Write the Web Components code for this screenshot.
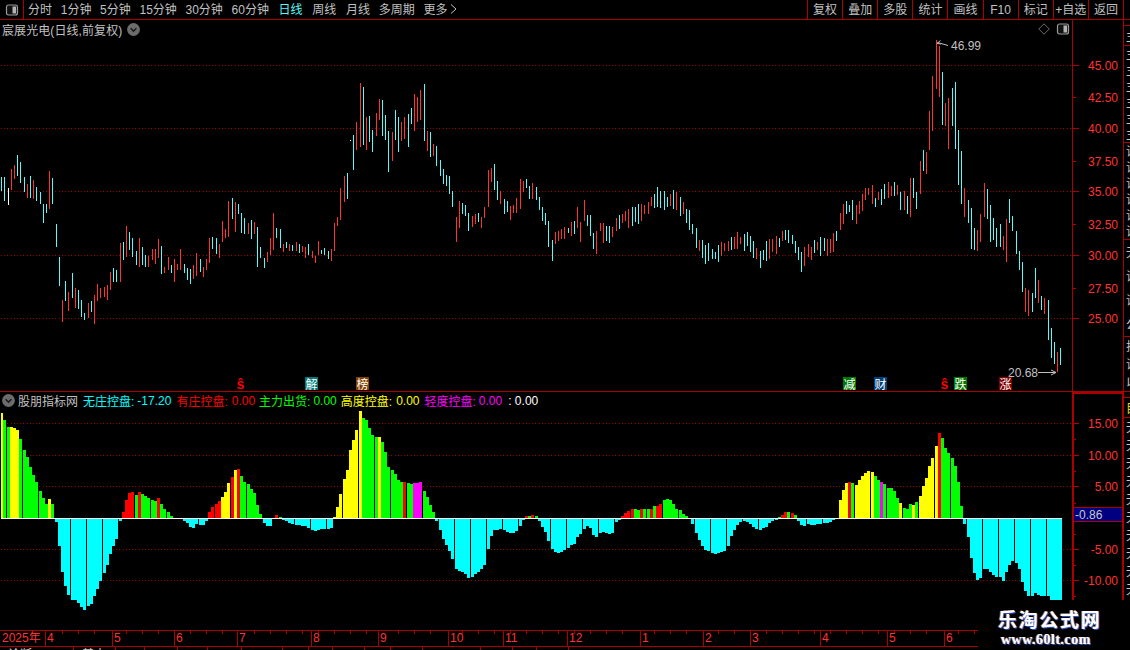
<!DOCTYPE html>
<html lang="zh">
<head>
<meta charset="utf-8">
<title>股朋指标网</title>
<style>
html,body{margin:0;padding:0;background:#000}
body{font:12px "Liberation Sans","Noto Sans CJK SC",sans-serif;color:#c0c0c0}
</style>
</head>
<body>
<tdx-app>
  <tdx-toolbar></tdx-toolbar>
  <tdx-workspace>
    <tdx-panes>
      <price-pane></price-pane>
      <indicator-pane></indicator-pane>
      <time-axis></time-axis>
      <tab-strip></tab-strip>
    </tdx-panes>
    <side-strip></side-strip>
  </tdx-workspace>
  <water-mark></water-mark>
</tdx-app>
<script>
const FONT='"Liberation Sans","Noto Sans CJK SC",sans-serif';
const LINE='#aa0000', NUM='#ff3232', CY='#54fcfc', RD='#ff3232';
const NS='http://www.w3.org/2000/svg';

function make(name, css, html, init){
  customElements.define(name, class extends HTMLElement{
    constructor(){
      super();
      const r=this.attachShadow({mode:'open'});
      r.innerHTML='<style>'+css+'</style>'+html;
      if(init) init(r,this);
    }
  });
}
const barX=j=>16*Math.floor((j+3)/5)-9+3*((j+3)%5);
const candleX=j=>barX(j)+1;

/* ---------- price data, read off the reference ---------- */
const segA=`111 153 c,111 183 c,144 195 w,87 150 r,75 117 r,45 108 c,66 129 c,111 156 c,132 174 r,108 174 c,120 177 r,141 183 c,156 192 c,192 249 c,192 219 c,93 207 r,114 192 c,252 321 c,351 438 c,480 546 r,423 483 c,456 513 r,399 474 c,444 504 r,450 507 c,480 531 c,519 540 c,489 534 r,483 516 c,465 552 r,432 483 r,444 474 r,441 471 r,435 480 r,396 450 r,384 426 c,390 426 c,309 426 r,306 360 c,258 351 r,276 330 c,294 351 c,333 375 c,294 381 r,321 375 c,345 381 c,348 381 r,327 360 r,327 372 r,297 354 r,318 402 c,381 399 r,351 390 r,375 399 c,357 426 r,372 390 r,327 390 r,372 399 c,384 420 c,387 432 c,375 417 r,339 408 r`;
const segB=`552 590 c,576 606 r,552 585 r,489 564 r,486 522 c,489 537 c,507 549 r,438 501 r,462 489 r,378 486 r,369 432 c,381 471 r,387 417 c,414 474 c,429 477 c,444 477 r,435 492 c,441 477 r,456 576 c,516 549 c,549 579 c,531 561 r,489 540 r,414 525 r,459 489 c,462 519 c,507 531 r,501 519 c,507 528 r,510 528 c,501 528 r,507 534 c,513 531 r,516 549 r,507 540 c,528 549 r,543 564 r,498 540 r,525 537 c,519 540 c,528 552 c,522 558 r,444 528 r,426 453 r,339 435 r,303 381 r,294 372 c,195 198 w,180 285 c,141 225 r,24 216 r,36 210 c,126 225 r,123 201 c,165 231 c,114 183 r,72 135 r,75 183 c,120 195 c,168 291 c,171 258 r,105 195 c,126 231 c,141 198 r,126 192 r,117 216 c,99 147 c,57 168 r,66 141 r,45 135 r,27 198 c,168 228 r,171 246 c,207 243 r,213 273 c,255 303 c,282 327 c,300 333 c,303 357 c,348 396 c,426 501 r,378 459 r,384 417 c,390 423 c,414 468 c,423 456 r,417 447 r,414 441 c,426 459 r,396 429 r,285 396 r,279 321 r,267 345 c,318 375 c,348 387 r,372 417 c,378 411 c,393 435 r,390 414 r,369 414 r,312 402 r,318 351 r,312 339 c,333 372 c,324 372 r,336 375 c,366 405 c,396 438 c,414 450 c,438 516 c,495 558 c,471 507 r,468 498 r,462 492 r,456 492 r,459 474 c,441 483 r,438 477 c,396 459 r,441 501 r,375 438 r,420 453 c,420 483 c,474 522 c,468 537 r`;
const segD=`486 540 c,483 540 r,498 552 c,444 561 r,444 504 c,486 537 c,393 492 r,360 423 c,366 432 r,243 360 r,138 303 r,30 177 r,48 201 r,126 285 c,219 288 r,204 357 r,174 288 c,156 357 c,300 465 c,363 522 c,474 561 r,510 579 c,534 657 c,594 660 c,600 663 r,552 636 r,459 561 r,477 567 c,525 636 c,564 630 c,594 651 c,582 651 c,618 660 r,567 696 r,507 579 c,558 603 c,603 672 c,663 720 c`;
const tail=[[262,292,'c'],[288,312,'r'],[290,316,'r'],[293,312,'c'],[268,298,'c'],[280,303,'r'],[296,310,'c'],[298,314,'r'],[300,340,'c'],[328,358,'c'],[342,364,'c'],[352,372,'r'],[348,365,'c']];
const midKeys=[[597,228],[605,232],[610,235],[615,228],[620,222],[625,218],[630,215],[640,212],[650,205],[655,200],[660,198],[665,200],[670,198],[675,200],[680,208],[685,212],[690,222],[695,235],[700,250],[705,252],[710,254],[715,255],[720,252],[725,247],[730,245],[735,241],[740,239],[745,240],[750,243],[755,252],[760,258],[765,250],[770,248],[775,245],[780,240],[785,235],[790,240],[795,245],[800,262],[805,252],[810,252],[815,248],[820,246],[825,246],[830,246],[835,240],[840,222],[845,205],[850,208],[855,214],[860,205],[865,196],[870,192],[875,200],[880,197],[885,192],[890,192],[897,190]];

function candles(){
  const out=[];
  const seg=(s,start,off)=>s.split(',').forEach((t,i)=>{
    const [a,b,c]=t.trim().split(' ');
    out[start+i]={t:off+a/3,b:off+b/3,c};
  });
  seg(segA,0,140); seg(segB,62,75); seg(segD,281,30);
  tail.forEach((v,i)=>out[319+i]={t:v[0],b:v[1],c:v[2]});
  let s=1234;
  const rnd=()=>(s=(s*1103515245+12345)%2147483648)/2147483648;
  for(let j=187;j<=280;j++){
    const x=candleX(j);
    let k=0; while(k<midKeys.length-2&&midKeys[k+1][0]<x)k++;
    const [x0,y0]=midKeys[k],[x1,y1]=midKeys[k+1];
    const cen=y0+(y1-y0)*(x-x0)/(x1-x0);
    const h=3.5+rnd()*6.5, sh=(rnd()-.5)*5;
    out[j]={t:cen-h+sh,b:cen+h+sh,c:(rnd()<(y1>y0?.3:.65))?'r':'c'};
  }
  return out;
}
/* ---------- indicator data ---------- */
const H0=`105y 98g 91g 91y 90y 88y 79g 68g 61g 51g 43g 36g 27g 20g 14g 19y 14g -4 -28 -54 -68 -77 -82 -82 -85 -89 -92 -88 -86 -78 -71 -63 -55 -47 -36 -28 -21 -3 6r 18r 25r 26r 23g 26r 24g 22g 20g 18g 17g 20r 14g 9g 6g 2g 0 -1 0 -3 -5 -9 -10 -6 -7 -7 -3 6r 11r 14r 17r 21y 26y 35y 41r 48y 49r 42g 36g 34g 29g 25g 13g 4g -5 -8 -8 0 3r 1g -2 -3 -5 -6 -7 -7 -8 -8 -10 -12 -13 -12 -11 -11 -11 -10 1y 11y 24y 39y 48y 68y 78y 88y 107y 100g 98g 90g 83g 81g 81y 76g 66g 51g 48g 44g 38g 36g 36r 35g 34g 35m 35m 36m 27g 21g 13g 6g -3 -12 -21 -27 -33 -41 -51 -53 -54 -56 -60 -59 -56 -54 -51 -47 -31 -18 -12 -12 -11 -12 -14 -15 -15 -13 -8 -2 2r 2g 3r 2g -3 -9 -14 -23 -31 -34 -35 -34 -32 -30 -27 -26 -19 -16 -11 -8 -10 -17 -19`;
const H1=`-15 -14 -15 -16 -15 -4 -2 2r 5r 7r 9r 9g 8g 9r 9g 9g 9r 12g 12r 14r 18g 19g 18g 14g 9g 8g 4g 2g -1 -6 -15 -22 -28 -32 -33 -35 -36 -35 -34 -33 -28 -18 -12 -7 -4 -3 -4 -6 -9 -11 -12 -10 -9 -5 -3 -2 1g 3r 6r 6g 5r 3g -3 -7 -8 -6 -7 -7 -6 -6 -5 -5 -4 -2 -1 18y 28y 35y 36r 35g 33y 38y 42y 45y 47y 46y 42g 38g 36m 34g 30g 30g 27g 20g 15y 10g 9g 14g 13y 16g 22y 32y 40y 52y 60y 72y 85r 80g 70g 65g 60g 52g 36g 12g -6`;
const H2=`-19 -40 -55 -62 -60 -51 -51 -54 -57 -59 -59 -63 -54 -47 -43 -45 -51 -64 -73 -78 -78 -75 -77 -78 -78 -78 -82 -82 -82 -82`;

function svgEl(tag,attrs,text){
  const e=document.createElementNS(NS,tag);
  for(const k in attrs)e.setAttribute(k,attrs[k]);
  if(text!==undefined)e.textContent=text;
  return e;
}
function rect(svg,x,y,w,h,fill){svg.appendChild(svgEl('rect',{x,y,width:w,height:h,fill,'shape-rendering':'crispEdges'}));}
function dots(svg,y){
  svg.appendChild(svgEl('line',{x1:1,x2:1072,y1:y+.5,y2:y+.5,stroke:'#9a0000','stroke-width':1,'stroke-dasharray':'1 2.2','shape-rendering':'crispEdges'}));
}
function axisMarks(svg,items,x0){
  items.forEach(([y,label,major])=>{
    rect(svg,x0,y,major?(1079-x0):(1076-x0),1,LINE);
    if(label)svg.appendChild(svgEl('text',{x:1118,y:y+5,'text-anchor':'end',fill:NUM,'font-size':12,'font-family':FONT},label));
  });
}

/* ---------- shell ---------- */
make('tdx-app',':host{display:flex;flex-direction:column;width:1130px;height:650px;position:relative;overflow:hidden;background:#000}','<slot></slot>');
make('tdx-workspace',':host{display:flex;flex:1;min-height:0}','<slot></slot>');
make('tdx-panes',':host{display:flex;flex-direction:column;width:1123px;height:630px;overflow:hidden}','<slot></slot>');

const toggleIcon=`<svg width="14" height="12" viewBox="0 0 14 12"><rect x="1.5" y="1" width="11" height="10" rx="2" fill="#111" stroke="#9a9a9a" stroke-width="1.2"/><rect x="7.5" y="2.5" width="3.6" height="7" fill="#b4b4b4"/></svg>`;
make('toggle-icon',':host{display:inline-flex;width:14px;height:12px}',toggleIcon);
make('fold-icon',':host{display:inline-flex;width:13px;height:13px}',`<svg width="13" height="13" viewBox="0 0 13 13"><circle cx="6.5" cy="6.5" r="6.4" fill="#6c6c6c"/><path d="M3.6 5.2 6.5 8.1 9.4 5.2" fill="none" stroke="#1c1c1c" stroke-width="1.5"/></svg>`);

make('period-item',`:host{display:inline-block;white-space:nowrap;color:#c0c0c0}:host([on]){color:#5cf6f6}:host([nudge]){margin-left:1px}`,'<slot></slot>');
make('tool-button',`:host{flex:1;display:flex;align-items:center;justify-content:center;border-right:1px solid ${LINE};color:#c0c0c0;white-space:nowrap;min-width:0;padding-top:1px}`,'<slot></slot>');

make('tdx-toolbar',`
:host{display:flex;height:19px;border-bottom:1px solid ${LINE};box-sizing:content-box;font:12px ${FONT};line-height:18px;padding-right:6px;flex:none}
.ico{width:23px;flex:none;display:flex;align-items:center;justify-content:center;border-right:1px solid ${LINE};box-sizing:content-box}
.per{flex:1;display:flex;gap:8.7px;padding:1px 0 0 4px;align-items:center}
.btns{display:flex;width:317px;border-left:1px solid ${LINE};box-sizing:border-box}
.arr{margin-left:3px}
`,`<div class="ico"><toggle-icon></toggle-icon></div>
<div class="per">
<period-item>分时</period-item><period-item>1分钟</period-item><period-item>5分钟</period-item><period-item>15分钟</period-item><period-item>30分钟</period-item><period-item>60分钟</period-item><period-item on nudge>日线</period-item><period-item nudge>周线</period-item><period-item nudge>月线</period-item><period-item>多周期</period-item><period-item>更多<svg class="arr" width="7" height="10" viewBox="0 0 7 10"><path d="M1 .5 6 5 1 9.5" fill="none" stroke="#c0c0c0"/></svg></period-item>
</div>
<div class="btns"><tool-button>复权</tool-button><tool-button>叠加</tool-button><tool-button>多股</tool-button><tool-button>统计</tool-button><tool-button>画线</tool-button><tool-button>F10</tool-button><tool-button>标记</tool-button><tool-button>+自选</tool-button><tool-button>返回</tool-button></div>`);

/* ---------- event marks on the price pane ---------- */
make('event-mark',`:host{position:absolute;top:357px;width:13px;height:13px;display:flex;align-items:center;justify-content:center;font:12px "Noto Sans CJK SC",sans-serif;line-height:13px;color:#fff}
:host([dollar]){color:#ff0000;font:bold 14px "Liberation Sans",sans-serif}`,'<slot></slot>');

/* ---------- price pane ---------- */
make('price-pane',`
:host{display:grid;grid-template-columns:1072px 51px;height:371px;border-bottom:1px solid ${LINE};position:relative;flex:none;font:12px ${FONT}}
svg{display:block}
.axis{border-left:1px solid ${LINE};box-sizing:border-box;height:371px}
.title{position:absolute;left:2px;top:0;height:18px;display:flex;align-items:center;gap:5px;color:#c0c0c0;white-space:nowrap;letter-spacing:.08px}
.tools{position:absolute;left:1038px;top:3px;display:flex;align-items:center;gap:6px}
`,`<svg class="chart" width="1072" height="371" viewBox="0 20 1072 371"></svg>
<svg class="axis" width="51" height="371" viewBox="1073 20 50 371"></svg>
<div class="title"><span>宸展光电(日线,前复权)</span><fold-icon></fold-icon></div>
<div class="tools"><svg width="12" height="12" viewBox="0 0 12 12"><path d="M6 .8 11.2 6 6 11.2 .8 6Z" fill="none" stroke="#6a6a6a"/></svg><toggle-icon></toggle-icon></div>
<event-mark dollar style="left:234px">ŝ</event-mark>
<event-mark style="left:305px;background:#007878">解</event-mark>
<event-mark style="left:356px;background:#804000">榜</event-mark>
<event-mark style="left:843px;background:#007800">减</event-mark>
<event-mark style="left:874px;background:#004078">财</event-mark>
<event-mark dollar style="left:938px">ŝ</event-mark>
<event-mark style="left:954px;background:#007800">跌</event-mark>
<event-mark style="left:999px;background:#800000">涨</event-mark>`,
(r)=>{
  const s=r.querySelector('.chart');
  [65,128,191,255,318].forEach(y=>dots(s,y));
  const cs=candles();
  const col={r:RD,c:CY,w:'#ffffff'};
  cs.forEach((c,j)=>{ if(c) rect(s,candleX(j),Math.round(c.t),1,Math.max(1,Math.round(c.b-c.t)),col[c.c]); });
  const g='#c0c0c0';
  s.appendChild(svgEl('path',{d:'M937 43.5 L940.5 40.5 M937 43.5 L941 44 M937.5 42.5 L948 45.5',stroke:g,fill:'none','stroke-width':1}));
  s.appendChild(svgEl('text',{x:951,y:49.5,fill:g,'font-size':12,'font-family':FONT},'46.99'));
  s.appendChild(svgEl('path',{d:'M1038 372.5H1056 M1056 372.5 L1051 370 M1056 372.5 L1051 375',stroke:g,fill:'none','stroke-width':1}));
  s.appendChild(svgEl('text',{x:1008,y:376.5,fill:g,'font-size':12,'font-family':FONT},'20.68'));
  const a=r.querySelector('.axis');
  axisMarks(a,[[65,'45.00',1],[97,'42.50',0],[128,'40.00',1],[161,'37.50',0],[191,'35.00',1],[224,'32.50',0],[255,'30.00',1],[288,'27.50',0],[318,'25.00',1]],1073);
});

/* ---------- indicator pane ---------- */
make('indicator-pane',`
:host{display:grid;grid-template-columns:1072px 51px;height:238px;position:relative;flex:none;font:12px ${FONT}}
svg{display:block}
.axis{border:solid ${LINE};border-width:2px 1px 0 2px;box-sizing:border-box;height:238px;width:51px}
.legend{position:absolute;left:2px;top:0;height:17px;display:flex;align-items:center;white-space:nowrap}
.legend span{display:inline-block}
.now{position:absolute;left:1074px;top:115px;width:48px;height:15px;box-sizing:border-box;background:#000080;border:solid ${LINE};border-width:1px 0;color:#c8c8c8;line-height:14px;padding-left:1px}
`,`<svg class="chart" width="1072" height="238" viewBox="0 392 1072 238"></svg>
<svg class="axis" width="51" height="238" viewBox="1074 394 48 236"></svg>
<div class="legend"><fold-icon></fold-icon>
<span style="color:#c0c0c0;margin-left:3px">股朋指标网</span>
<span style="color:#0ff;margin-left:5px">无庄控盘:</span><span style="color:#0ff;margin-left:3px">-17.20</span>
<span style="color:#f00;margin-left:5px">有庄控盘:</span><span style="color:#f00;margin-left:4px">0.00</span>
<span style="color:#0f0;margin-left:4px">主力出货:</span><span style="color:#0f0;margin-left:3px">0.00</span>
<span style="color:#ff0;margin-left:4px">高度控盘:</span><span style="color:#ff0;margin-left:4px">0.00</span>
<span style="color:#f0f;margin-left:5px">轻度控盘:</span><span style="color:#f0f;margin-left:3px">0.00</span>
<span style="color:#fff;margin-left:6px">: 0.00</span></div>
<div class="now">-0.86</div>`,
(r)=>{
  const s=r.querySelector('.chart');
  [423,455,486,549,580].forEach(y=>dots(s,y));
  const palette={y:'#ffff00',g:'#00ff00',r:'#ff0000',m:'#ff00ff'};
  const put=(str,start)=>str.trim().split(/\s+/).forEach((t,i)=>{
    const v=parseFloat(t), j=start+i, x=barX(j);
    const x0=Math.max(1,x), w=x+3-x0;
    if(v>0) rect(s,x0,518-v,w,v,palette[t.slice(-1)]);
    else if(v<0) rect(s,x0,519,w,-v-1,'#00ffff');
  });
  put(H0,0); put(H1,187); put(H2,302);
  rect(s,1,518,1061,1,'#ffffff');
  const a=r.querySelector('.axis');
  axisMarks(a,[[423,'15.00',1],[439,'',0],[455,'10.00',1],[471,'',0],[486,'5.00',1],[503,'',0],[534,'',0],[549,'-5.00',1],[565,'',0],[580,'-10.00',1],[596,'',0]],1074);
});

/* ---------- time axis ---------- */
make('time-axis',`
:host{display:block;position:relative;height:15px;width:1123px;border-top:1px solid ${LINE};border-bottom:1px solid ${LINE};flex:none;font:12px ${FONT};color:${NUM};line-height:15px;box-sizing:content-box}
svg{position:absolute;left:0;top:0}
.l{position:absolute;top:0;white-space:nowrap}
`,`<svg width="1123" height="15"></svg>`,
(r)=>{
  const seps=[[45,'4'],[112,'5'],[174,'6'],[237,'7'],[311,'8'],[378,'9'],[448,'10'],[503,'11'],[567,'12'],[640,'1'],[703,'2'],[750,'3'],[820,'4'],[887,'5'],[944,'6']];
  const s=r.querySelector('svg');
  for(let x=62;x<1123;x+=16) if(!seps.some(p=>Math.abs(p[0]-x)<5)) rect(s,x,0,1,3,LINE);
  seps.forEach(([x,t])=>{
    rect(s,x,0,1,15,LINE);
    const d=document.createElement('span');d.className='l';d.style.left=(x+2)+'px';d.textContent=t;r.appendChild(d);
  });
  const y=document.createElement('span');y.className='l';y.style.left='2px';y.textContent='2025年';r.appendChild(y);
});

/* ---------- tab strip: only the top pixels reach the window ---------- */
make('tab-cell',`:host{display:block;box-sizing:border-box;border-right:1px solid ${LINE};height:14px;overflow:hidden;white-space:nowrap;padding-left:8px;color:#d0d0d0;font:12px "Noto Sans CJK SC",sans-serif;line-height:14px}`,'<slot></slot>');
make('tab-strip',`:host{display:flex;height:14px;flex:none;margin-top:0}`,'<slot></slot>');
(function(){
  const host=document.querySelector('tab-strip');
  [[74,'诊断'],[42,'基本'],[29,''],[33,''],[30,''],[34,''],[41,''],[26,''],[24,''],[32,''],[26,''],[32,''],[58,''],[32,''],[24,''],[32,'']].forEach(([w,t])=>{
    const c=document.createElement('tab-cell');c.style.width=w+'px';c.textContent=t;host.appendChild(c);
  });
})();

/* ---------- right edge strip, clipped by the window ---------- */
make('strip-group',`:host{display:block;box-sizing:content-box;border-bottom:1px solid ${LINE};overflow:hidden;color:#c8c8c8;font:12px "Noto Sans CJK SC",sans-serif;white-space:nowrap;padding-left:2px}`,'<slot></slot>');
make('side-strip',`:host{display:block;width:7px;height:630px;border-left:1px solid ${LINE};box-sizing:border-box;overflow:hidden;flex:none}`,
`<strip-group style="height:5px"></strip-group>
<strip-group style="height:19px;line-height:19px">主</strip-group>
<strip-group style="height:96px;line-height:16px">主<br>主<br>主<br>主<br>主<br>主</strip-group>
<strip-group style="height:96px;line-height:16px">详<br>详<br>详<br>详<br>详<br>详</strip-group>
<strip-group style="height:96px;line-height:24px">无<br>详<br>详<br>公</strip-group>
<strip-group style="height:54px;line-height:18px">抖<br>详<br>以</strip-group>
<strip-group style="height:5px"></strip-group>
<strip-group style="height:19px;line-height:19px;color:#e0e000">目</strip-group>
<strip-group style="height:190px;line-height:18px;border:0">无<br>无<br>无<br>无<br>无<br>无<br>无<br>无<br>无<br>无</strip-group>`);

/* ---------- watermark overlay ---------- */
make('water-mark',`
:host{position:absolute;left:978px;top:600px;width:152px;height:50px;background:#000;display:block;text-align:left}
.a{position:absolute;left:20px;top:6px;font:bold 19px "Noto Sans CJK SC",sans-serif;letter-spacing:1.7px;line-height:26px;color:#fff;white-space:nowrap;text-shadow:1px 1px 0 #2a50c8,-1px 0 0 #b07030}
.b{position:absolute;left:23px;top:32px;font:bold 14px "Liberation Serif",serif;letter-spacing:.5px;line-height:16px;color:#fff;white-space:nowrap;text-shadow:1px 1px 0 #2a50c8,-1px 0 0 #b07030}
`,`<div class="a">乐淘公式网</div><div class="b">www.60lt.com</div>`);
</script>
</body>
</html>
